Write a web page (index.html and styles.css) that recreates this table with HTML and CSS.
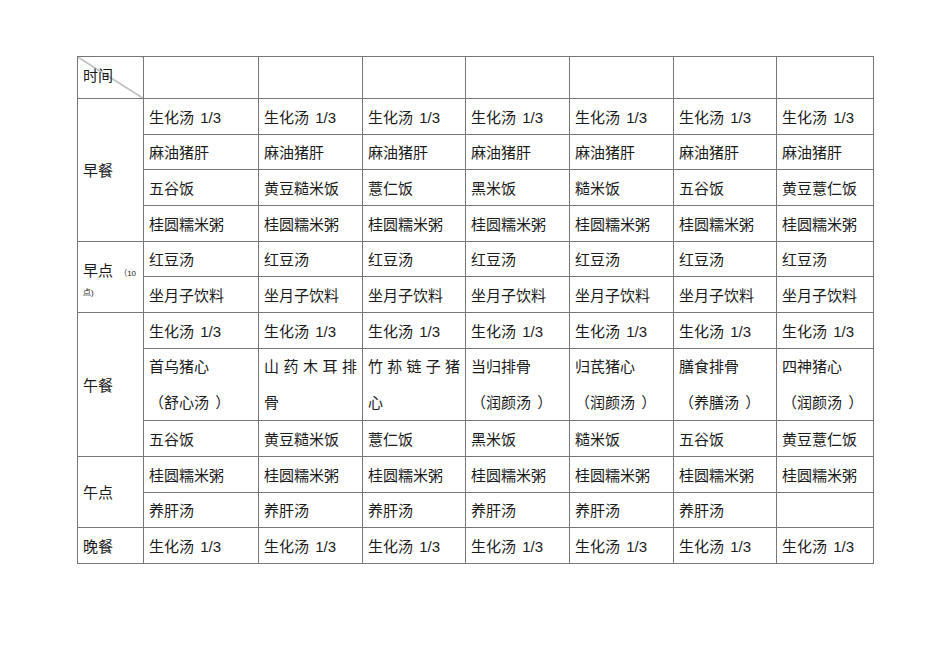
FILE: index.html
```html
<!DOCTYPE html>
<html lang="zh-CN">
<head>
<meta charset="utf-8">
<title>月子餐</title>
<link rel="stylesheet" href="styles.css">
</head>
<body>
<div class="page">
<table class="menu">
<colgroup>
<col class="c0"><col class="c1"><col class="c2"><col class="c3"><col class="c4"><col class="c5"><col class="c6"><col class="c7">
</colgroup>
<tr class="hd">
<td class="diag"><span class="diag-text">时间</span></td>
<td></td><td></td><td></td><td></td><td></td><td></td><td></td>
</tr>
<tr class="a">
<td class="meal" rowspan="4">早餐</td>
<td>生化汤 1/3</td><td>生化汤 1/3</td><td>生化汤 1/3</td><td>生化汤 1/3</td><td>生化汤 1/3</td><td>生化汤 1/3</td><td>生化汤 1/3</td>
</tr>
<tr class="b">
<td>麻油猪肝</td><td>麻油猪肝</td><td>麻油猪肝</td><td>麻油猪肝</td><td>麻油猪肝</td><td>麻油猪肝</td><td>麻油猪肝</td>
</tr>
<tr class="a">
<td>五谷饭</td><td>黄豆糙米饭</td><td>薏仁饭</td><td>黑米饭</td><td>糙米饭</td><td>五谷饭</td><td>黄豆薏仁饭</td>
</tr>
<tr class="a">
<td>桂圆糯米粥</td><td>桂圆糯米粥</td><td>桂圆糯米粥</td><td>桂圆糯米粥</td><td>桂圆糯米粥</td><td>桂圆糯米粥</td><td>桂圆糯米粥</td>
</tr>
<tr class="b">
<td class="meal snack" rowspan="2">早点 <span class="small">（10<br>点)</span></td>
<td>红豆汤</td><td>红豆汤</td><td>红豆汤</td><td>红豆汤</td><td>红豆汤</td><td>红豆汤</td><td>红豆汤</td>
</tr>
<tr class="a">
<td>坐月子饮料</td><td>坐月子饮料</td><td>坐月子饮料</td><td>坐月子饮料</td><td>坐月子饮料</td><td>坐月子饮料</td><td>坐月子饮料</td>
</tr>
<tr class="a">
<td class="meal" rowspan="3">午餐</td>
<td>生化汤 1/3</td><td>生化汤 1/3</td><td>生化汤 1/3</td><td>生化汤 1/3</td><td>生化汤 1/3</td><td>生化汤 1/3</td><td>生化汤 1/3</td>
</tr>
<tr class="dbl">
<td class="two">首乌猪心<br>（舒心汤 ）</td>
<td class="two"><span class="jl">山药木耳排</span>骨</td>
<td class="two"><span class="jl">竹荪链子猪</span>心</td>
<td class="two">当归排骨<br>（润颜汤 ）</td>
<td class="two">归芪猪心<br>（润颜汤 ）</td>
<td class="two">膳食排骨<br>（养膳汤 ）</td>
<td class="two">四神猪心<br>（润颜汤 ）</td>
</tr>
<tr class="a">
<td>五谷饭</td><td>黄豆糙米饭</td><td>薏仁饭</td><td>黑米饭</td><td>糙米饭</td><td>五谷饭</td><td>黄豆薏仁饭</td>
</tr>
<tr class="a">
<td class="meal" rowspan="2">午点</td>
<td>桂圆糯米粥</td><td>桂圆糯米粥</td><td>桂圆糯米粥</td><td>桂圆糯米粥</td><td>桂圆糯米粥</td><td>桂圆糯米粥</td><td>桂圆糯米粥</td>
</tr>
<tr class="b">
<td>养肝汤</td><td>养肝汤</td><td>养肝汤</td><td>养肝汤</td><td>养肝汤</td><td>养肝汤</td><td></td>
</tr>
<tr class="a">
<td class="meal">晚餐</td>
<td>生化汤 1/3</td><td>生化汤 1/3</td><td>生化汤 1/3</td><td>生化汤 1/3</td><td>生化汤 1/3</td><td>生化汤 1/3</td><td>生化汤 1/3</td>
</tr>
</table>
</div>
</body>
</html>
```

FILE: styles.css
```css
html, body {
  margin: 0;
  padding: 0;
  background: #ffffff;
}

.page {
  padding: 56px 0 0 77px;
  font-family: "Liberation Sans", "Noto Sans CJK SC", sans-serif;
  font-size: 15px;
  color: #1a1a1a;
}

.menu {
  border-collapse: collapse;
  table-layout: fixed;
  width: 797px;
}

.c0 { width: 66px; }
.c1 { width: 115px; }
.c2 { width: 104px; }
.c3 { width: 103px; }
.c4 { width: 104px; }
.c5 { width: 104px; }
.c6 { width: 103px; }
.c7 { width: 97px; }

.menu td {
  border: 1px solid #777777;
  padding: 2px 5px 0 5px;
  vertical-align: middle;
  line-height: 20px;
  white-space: nowrap;
  overflow: hidden;
  word-spacing: 2px;
}

.hd { height: 42px; }
.a { height: 36px; }
.b { height: 35px; }
.dbl { height: 71px; }

.menu td.diag {
  background: linear-gradient(to top right,
    transparent calc(50% - 0.8px),
    #777777 50%,
    transparent calc(50% + 0.8px));
  padding: 0 5px 4px 5px;
}

.menu td.snack {
  vertical-align: top;
  padding-top: 20px;
  line-height: 18.5px;
}

.small {
  font-size: 8px;
  line-height: 8px;
}

.menu td.two {
  vertical-align: top;
  padding-top: 0;
  line-height: 35.5px;
  white-space: normal;
}

.jl {
  display: block;
  text-align: justify;
  text-align-last: justify;
}
```
